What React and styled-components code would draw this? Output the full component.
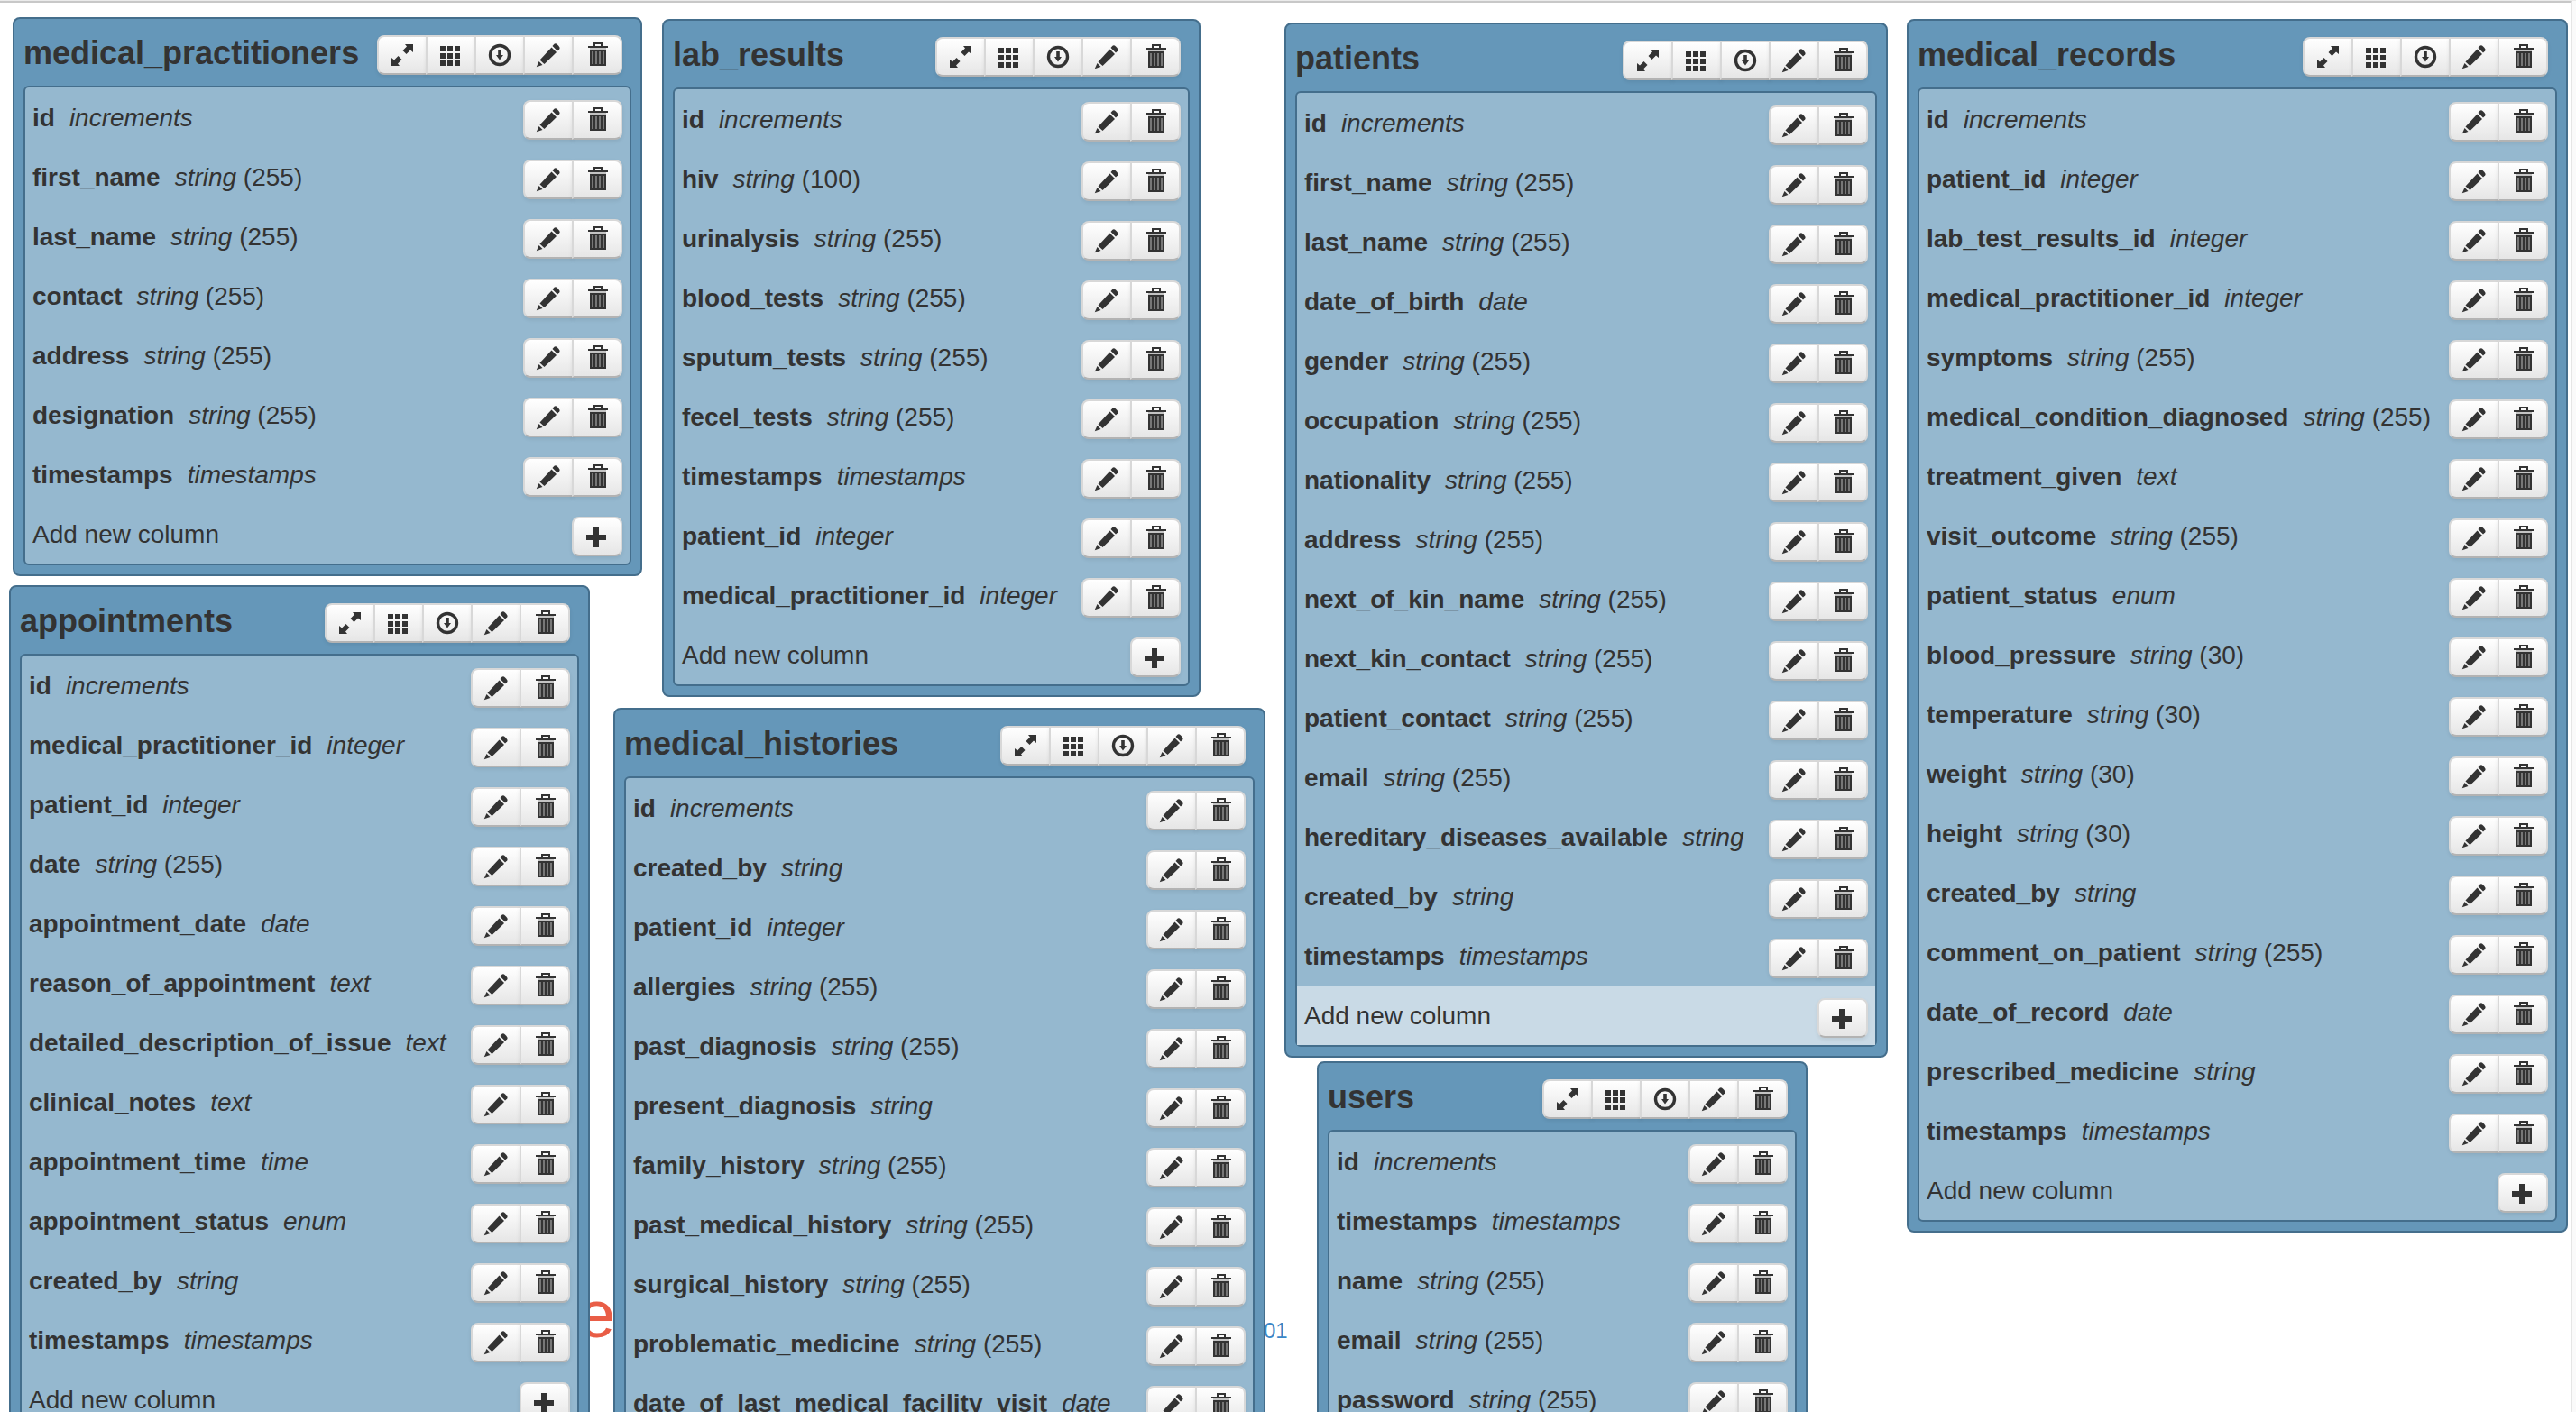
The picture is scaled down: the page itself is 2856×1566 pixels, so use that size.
import React from "react";
import styled, { createGlobalStyle, css } from "styled-components";

const GlobalStyle = createGlobalStyle`
  *, *::before, *::after { box-sizing: border-box; }
  body {
    margin: 0;
    background: #fafafa;
    color: #333;
    font-family: "Liberation Sans", Arial, Helvetica, sans-serif;
    font-size: 28px;
    line-height: 40px;
  }
`;

const Page = styled.div`
  height: 100vh;
  padding-right: 4px;
  border-top: 1px solid #ebebeb;
`;

const Canvas = styled.main`
  position: relative;
  height: 100%;
  overflow: hidden;
  background: #fff;
  border-top: 2px solid #c8c8c8;
  border-right: 2px solid #e6e6e6;
`;

const TableCard = styled.section`
  position: absolute;
  left: ${(p) => p.$x}px;
  top: ${(p) => p.$y}px;
  width: ${(p) => p.$width}px;
  padding: 0 10px 10px;
  background: #6597b9;
  border: 2px solid #446e8c;
  border-radius: 8px;
`;

const CardHeader = styled.header`
  display: flex;
  justify-content: space-between;
  align-items: center;
  height: 74px;
  padding: 6px 10px 0 0;
`;

const CardTitle = styled.h2`
  margin: 0;
  padding-bottom: 4px;
  font-size: 36px;
  line-height: 40px;
`;

const ColumnList = styled.ul`
  margin: 0;
  padding: 0;
  list-style: none;
  background: #95b8cf;
  border: 2px solid #446e8c;
  border-radius: 6px;
`;

const ColumnRow = styled.li`
  display: flex;
  justify-content: space-between;
  align-items: flex-start;
  height: 66px;
  padding: 14px 8px 8px;
  background: ${(p) => (p.$highlighted ? "#c9dae6" : "transparent")};
`;

const ColumnText = styled.span`
  white-space: nowrap;
`;

const ColumnName = styled.strong`
  margin-right: 16px;
`;

const ButtonGroup = styled.div`
  display: flex;
`;

const raised = css`
  border: 2px solid #d8d8d8;
  border-bottom-color: #b3b3b3;
  background: linear-gradient(#ffffff, #e6e6e6);
  box-shadow: 0 2px 4px rgba(0, 0, 0, 0.08);
`;

const IconButton = styled.button`
  ${raised}
  display: flex;
  align-items: center;
  justify-content: center;
  width: 56px;
  height: 44px;
  padding: 0;
  color: #333;
  cursor: pointer;

  & + & { margin-left: -2px; }
  &:first-child { border-top-left-radius: 8px; border-bottom-left-radius: 8px; }
  &:last-child { border-top-right-radius: 8px; border-bottom-right-radius: 8px; }
`;

const Glyph = styled.svg`
  display: block;
  width: 28px;
  height: 28px;
  fill: currentColor;
`;

const BrandText = styled.span`
  position: absolute;
  left: 641px;
  top: 1420px;
  color: #e95d46;
  font-size: 74px;
  line-height: 70px;
`;

const VersionLink = styled.a`
  position: absolute;
  left: 1401px;
  top: 1453px;
  color: #3a87c8;
  font-size: 24px;
  text-decoration: none;
`;

const icons = {
  expand: (
    <>
      <path d="M17 2h9v9l-3-2.500-4.500 4.500-4-4L19 4.500z" />
      <path d="M11 26H2v-9l3 2.500L9.500 15l4 4L9 23.500z" />
    </>
  ),
  grid: [4, 12, 20].map((y) =>
    [2, 10, 18].map((x) => <rect key={`${x}-${y}`} x={x} y={y} width="6" height="6" />)
  ),
  download: (
    <>
      <circle cx="14" cy="14" r="10.500" fill="none" stroke="currentColor" strokeWidth="3.400" />
      <path d="M12.200 8h3.600v6H18l-4 5.500-4-5.500h2.200z" />
    </>
  ),
  edit: (
    <>
      <path d="M18.500 4l2-2.200Q22 .5 24 2.500L25.500 4Q27.500 6 26.200 7.500L24 9.500z" />
      <path d="M4.500 19.500L17.500 5.500L23 11L9.500 24z" />
      <path d="M3.500 21l4 4L.8 27.200z" />
    </>
  ),
  remove: (
    <>
      <path d="M10 4V0h10v4h6v2H4V4zM12 2v2h6V2z" fillRule="evenodd" />
      <path d="M6 6h18v2H6z" fill="#c4c4c4" />
      <rect x="6" y="8" width="18" height="18" />
      <path d="M9 10v14M13 10v14M17 10v14M21 10v14" stroke="#777" strokeWidth="2" />
    </>
  ),
  plus: <path d="M10 4h6v8h8v6h-8v8h-6v-8H2v-6h8z" />,
};

function ActionButton({ icon, label }) {
  return (
    <IconButton type="button" aria-label={label}>
      <Glyph viewBox="0 0 28 28" aria-hidden="true">{icons[icon]}</Glyph>
    </IconButton>
  );
}

const tables = [
  {
    name: "medical_practitioners", x: 14, y: 16, width: 698,
    columns: [
      ["id", "increments"], ["first_name", "string", 255], ["last_name", "string", 255],
      ["contact", "string", 255], ["address", "string", 255], ["designation", "string", 255],
      ["timestamps", "timestamps"],
    ],
  },
  {
    name: "lab_results", x: 734, y: 18, width: 597,
    columns: [
      ["id", "increments"], ["hiv", "string", 100], ["urinalysis", "string", 255],
      ["blood_tests", "string", 255], ["sputum_tests", "string", 255], ["fecel_tests", "string", 255],
      ["timestamps", "timestamps"], ["patient_id", "integer"], ["medical_practitioner_id", "integer"],
    ],
  },
  {
    name: "patients", x: 1424, y: 22, width: 669, highlightAdd: true,
    columns: [
      ["id", "increments"], ["first_name", "string", 255], ["last_name", "string", 255],
      ["date_of_birth", "date"], ["gender", "string", 255], ["occupation", "string", 255],
      ["nationality", "string", 255], ["address", "string", 255], ["next_of_kin_name", "string", 255],
      ["next_kin_contact", "string", 255], ["patient_contact", "string", 255], ["email", "string", 255],
      ["hereditary_diseases_available", "string"], ["created_by", "string"], ["timestamps", "timestamps"],
    ],
  },
  {
    name: "medical_records", x: 2114, y: 18, width: 733,
    columns: [
      ["id", "increments"], ["patient_id", "integer"], ["lab_test_results_id", "integer"],
      ["medical_practitioner_id", "integer"], ["symptoms", "string", 255],
      ["medical_condition_diagnosed", "string", 255], ["treatment_given", "text"],
      ["visit_outcome", "string", 255], ["patient_status", "enum"], ["blood_pressure", "string", 30],
      ["temperature", "string", 30], ["weight", "string", 30], ["height", "string", 30],
      ["created_by", "string"], ["comment_on_patient", "string", 255], ["date_of_record", "date"],
      ["prescribed_medicine", "string"], ["timestamps", "timestamps"],
    ],
  },
  {
    name: "appointments", x: 10, y: 646, width: 644,
    columns: [
      ["id", "increments"], ["medical_practitioner_id", "integer"], ["patient_id", "integer"],
      ["date", "string", 255], ["appointment_date", "date"], ["reason_of_appointment", "text"],
      ["detailed_description_of_issue", "text"], ["clinical_notes", "text"],
      ["appointment_time", "time"], ["appointment_status", "enum"], ["created_by", "string"],
      ["timestamps", "timestamps"],
    ],
  },
  {
    name: "medical_histories", x: 680, y: 782, width: 723,
    columns: [
      ["id", "increments"], ["created_by", "string"], ["patient_id", "integer"],
      ["allergies", "string", 255], ["past_diagnosis", "string", 255], ["present_diagnosis", "string"],
      ["family_history", "string", 255], ["past_medical_history", "string", 255],
      ["surgical_history", "string", 255], ["problematic_medicine", "string", 255],
      ["date_of_last_medical_facility_visit", "date"],
    ],
  },
  {
    name: "users", x: 1460, y: 1174, width: 544,
    columns: [
      ["id", "increments"], ["timestamps", "timestamps"], ["name", "string", 255],
      ["email", "string", 255], ["password", "string", 255],
    ],
  },
];

function SchemaTable({ table }) {
  return (
    <TableCard $x={table.x} $y={table.y} $width={table.width}>
      <CardHeader>
        <CardTitle>{table.name}</CardTitle>
        <ButtonGroup>
          <ActionButton icon="expand" label="Resize table" />
          <ActionButton icon="grid" label="Change colour" />
          <ActionButton icon="download" label="Download table" />
          <ActionButton icon="edit" label="Edit table" />
          <ActionButton icon="remove" label="Delete table" />
        </ButtonGroup>
      </CardHeader>
      <ColumnList>
        {table.columns.map(([name, type, length]) => (
          <ColumnRow key={name}>
            <ColumnText>
              <ColumnName>{name}</ColumnName>
              <em>{type}</em>
              {length ? ` (${length})` : null}
            </ColumnText>
            <ButtonGroup>
              <ActionButton icon="edit" label={`Edit ${name}`} />
              <ActionButton icon="remove" label={`Delete ${name}`} />
            </ButtonGroup>
          </ColumnRow>
        ))}
        <ColumnRow $highlighted={table.highlightAdd}>
          <ColumnText>Add new column</ColumnText>
          <ButtonGroup>
            <ActionButton icon="plus" label="Add new column" />
          </ButtonGroup>
        </ColumnRow>
      </ColumnList>
    </TableCard>
  );
}

export default function App() {
  return (
    <>
      <GlobalStyle />
      <Page>
        <Canvas>
          <BrandText>e</BrandText>
          <VersionLink href="#version">01</VersionLink>
          {tables.map((table) => (
            <SchemaTable key={table.name} table={table} />
          ))}
        </Canvas>
      </Page>
    </>
  );
}
